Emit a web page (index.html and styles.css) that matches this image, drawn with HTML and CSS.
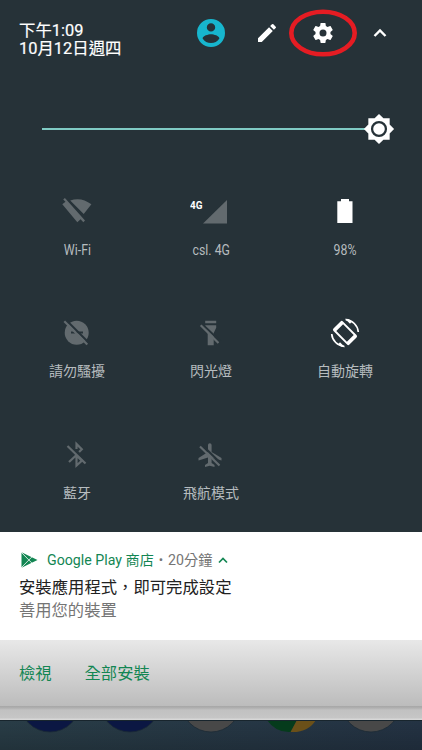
FILE: index.html
```html
<!DOCTYPE html>
<html lang="zh-Hant">
<head>
<meta charset="utf-8">
<title>快速設定</title>
<link rel="stylesheet" href="styles.css">
</head>
<body>
<main class="screen">
  <section class="panel">
    <header class="topbar">
      <div class="clock"><div>下午1:09</div><div>10月12日週四</div></div>
      <svg class="user" viewBox="2 2 20 20"><path fill="#17b6ce" d="M12 2a10 10 0 1 0 0 20 10 10 0 0 0 0-20zm0 3a3 3 0 1 1 0 6 3 3 0 0 1 0-6zm0 14.200a7.200 7.200 0 0 1-6-3.220c.03-1.990 4-3.080 6-3.080s5.970 1.090 6 3.080a7.200 7.200 0 0 1-6 3.220z"/></svg>
      <svg class="edit" viewBox="0 0 24 24"><path fill="#fff" d="M3 17.250V21h3.750L17.810 9.940l-3.750-3.750L3 17.250zM20.710 7.040a1 1 0 0 0 0-1.410l-2.340-2.340a1 1 0 0 0-1.410 0l-1.830 1.830 3.750 3.750 1.830-1.830z"/></svg>
      <span class="gear">
        <svg class="gear-icon" viewBox="0 0 24 24"><path fill="#fff" d="M19.430 12.980c.04-.32.07-.64.07-.98s-.03-.66-.07-.98l2.110-1.650c.19-.15.24-.42.12-.64l-2-3.460c-.12-.22-.39-.3-.61-.22l-2.490 1c-.52-.4-1.080-.73-1.690-.98l-.38-2.650C14.460 2.180 14.250 2 14 2h-4c-.25 0-.46.18-.49.42l-.38 2.650c-.61.25-1.170.59-1.690.98l-2.490-1c-.23-.09-.49 0-.61.22l-2 3.460c-.13.22-.07.49.12.64l2.110 1.650c-.04.32-.07.65-.07.98s.03.66.07.98l-2.110 1.650c-.19.15-.24.42-.12.64l2 3.460c.12.22.39.3.61.22l2.490-1c.52.4 1.080.73 1.690.98l.38 2.650c.03.24.24.42.49.42h4c.25 0 .46-.18.49-.42l.38-2.650c.61-.25 1.170-.59 1.690-.98l2.490 1c.23.09.49 0 .61-.22l2-3.460c.12-.22.07-.49-.12-.64l-2.110-1.650zM12 15.500a3.500 3.500 0 1 1 0-7 3.500 3.500 0 0 1 0 7z"/></svg>
        <svg class="ring" viewBox="0 0 68 48"><ellipse cx="34" cy="24" rx="31.700" ry="21.300" fill="none" stroke="#e51c23" stroke-width="4.600"/></svg>
      </span>
      <svg class="collapse" viewBox="0 0 14 10"><path d="M1.500 8 7 2.500 12.500 8" fill="none" stroke="#fff" stroke-width="2.400"/></svg>
    </header>

    <div class="brightness">
      <div class="track"></div>
      <svg class="thumb" viewBox="0 0 24 24"><path fill="#fff" d="M20 8.690V4h-4.690L12 .69 8.690 4H4v4.690L.69 12 4 15.310V20h4.690L12 23.310 15.310 20H20v-4.690L23.310 12z"/><circle cx="12" cy="12" r="5.200" fill="#fff" stroke="#263238" stroke-width="1.700"/></svg>
    </div>

    <div class="tiles">
      <div class="tile">
        <svg viewBox="0 0 36 36"><path class="dim" d="M3.300 11.300 6.500 8.800 4.200 6.600 5.900 4.900 26 27.500 24.300 29.200 21.600 26.300 18.300 29.300ZM11.200 7.600Q22 3.400 32.400 11.300L24.700 21Z"/></svg>
        <span class="label latin">Wi-Fi</span>
      </div>
      <div class="tile">
        <span class="signal"><b>4G</b><svg viewBox="0 0 24 24"><path class="dim" d="M24 0V23.500H0Z"/></svg></span>
        <span class="label latin">csl. 4G</span>
      </div>
      <div class="tile">
        <svg viewBox="0 0 36 36"><path fill="#fff" d="M14 6h8v2.300h3.500V30H10.300V8.300H14Z"/></svg>
        <span class="label latin">98%</span>
      </div>
      <div class="tile">
        <svg viewBox="0 0 36 36"><circle class="dim" cx="17.700" cy="17.700" r="12"/><path d="M12 17.500h12" stroke="#263238" stroke-width="2"/><path class="gap" d="M7.500 5.500 30 28"/><path class="slash" d="M5.300 6.300 28.300 29.600"/></svg>
        <span class="label">請勿騷擾</span>
      </div>
      <div class="tile">
        <svg viewBox="0 0 36 36"><path class="dim" d="M12.200 5.800h11v2.400h-11ZM12.200 10.200h11v2.600L20.700 18v12.200h-6V18L12.200 12.800Z"/><path class="gap" d="M9 9 27.500 26.500"/><path class="slash" d="M7.700 10.300 25.500 28"/></svg>
        <span class="label">閃光燈</span>
      </div>
      <div class="tile">
        <svg viewBox="0 0 36 36"><g transform="rotate(-45 18 18)" fill="#fff"><path fill-rule="evenodd" d="M13 6.700h10a1.700 1.700 0 0 1 1.700 1.700v19.200a1.700 1.700 0 0 1-1.700 1.700H13a1.700 1.700 0 0 1-1.700-1.700V8.400A1.700 1.700 0 0 1 13 6.700ZM13.200 10.500v15h9.600v-15Z"/></g><path d="M18.700 4.700A13.400 13.400 0 0 1 31.300 17M17.300 31.300A13.400 13.400 0 0 1 4.700 19" fill="none" stroke="#fff" stroke-width="1.700"/><path fill="#fff" d="m18 3.800 5 5 2-2.400-3-2ZM18 32.200l-5-5-2 2.400 3 2Z"/></svg>
        <span class="label">自動旋轉</span>
      </div>
      <div class="tile">
        <svg viewBox="0 0 36 36"><path d="M17.500 12V7l5.300 5.300-2.700 2.700M10 25l7.500-7M17.500 18v10.500l5.300-4.700-4-4" fill="none" stroke="#626a6e" stroke-width="2.200"/><path class="slash" d="M8.500 9 26.500 26.500"/></svg>
        <span class="label">藍牙</span>
      </div>
      <div class="tile">
        <svg viewBox="0 0 36 36"><path class="dim" d="M15 8a1.800 1.800 0 0 1 3.600 0v7L28.500 21v2.600L18.600 20.500V26L21.500 28v2L16.800 28.800 12 30v-2l3-2v-5.500L5.500 23.500V21L15 15Z"/><path class="gap" d="M8.500 7.500 28.500 27"/><path class="slash" d="M7 9.500 26.500 28.500"/></svg>
        <span class="label">飛航模式</span>
      </div>
    </div>
  </section>

  <section class="notice">
    <div class="source">
      <svg class="play" viewBox="0 0 18 18"><path fill="#138653" d="M1.500 1.200 17.500 9 1.500 16.800Z"/><path d="M1 1 12 12.200M1 17 12 5.800" stroke="#fff" stroke-width=".8"/></svg>
      <span class="app">Google Play 商店</span><span class="dot">•</span><span class="age">20分鐘</span>
      <svg class="caret" viewBox="0 0 10 7"><path d="M1 5.500 5 1.500 9 5.500" fill="none" stroke="#138653" stroke-width="1.700"/></svg>
    </div>
    <div class="title">安裝應用程式，即可完成設定</div>
    <div class="subtitle">善用您的裝置</div>
  </section>
  <div class="actions"><span>檢視</span><span>全部安裝</span></div>
  <div class="ledge"></div>
  <svg class="dock" viewBox="0 0 422 30">
    <defs><linearGradient id="sea"><stop offset="0" stop-color="#293d47"/><stop offset="1" stop-color="#243344"/></linearGradient>
    <linearGradient id="fade" x2="0" y2="1"><stop offset="0" stop-color="#000" stop-opacity="0"/><stop offset="1" stop-color="#000" stop-opacity=".18"/></linearGradient></defs>
    <rect width="422" height="30" fill="url(#sea)"/><rect width="422" height="30" fill="url(#fade)"/>
    <g stroke="#1b2a35" stroke-width=".8"><circle cx="50" cy="-18" r="30" fill="#0b1743"/><circle cx="130" cy="-18" r="30" fill="#0b1743"/><circle cx="211" cy="-18" r="30" fill="#484848"/><circle cx="371" cy="-18" r="30" fill="#484848"/></g>
    <path fill="#053b1c" d="M267 0Q276 13 291 12L297 0Z"/><path fill="#6b5019" d="M297 0 290.500 12Q308 13 316 0Z"/>
    <path d="M0 .5h422" stroke="#18252d"/>
  </svg>
</main>
</body>
</html>
```
FILE: styles.css
```css
* { box-sizing: border-box; }
body { margin: 0; font-family: Roboto, "Noto Sans CJK TC", sans-serif; }
svg { display: block; flex: none; }
.screen { width: 422px; height: 750px; overflow: hidden; display: flex; flex-direction: column; background: #263238; }
.panel { height: 532px; background: #263238; }

.topbar { height: 66px; padding-left: 19px; display: flex; align-items: center; }
.clock { width: 178px; padding-top: 13px; color: #fff; font-size: 16.400px; line-height: 18px; white-space: nowrap; -webkit-text-stroke: .2px #fff; }
.user { width: 28px; height: 28px; }
.edit { width: 24px; height: 24px; margin-left: 30px; }
.gear { position: relative; margin-left: 32px; }
.gear-icon { width: 24px; height: 24px; }
.ring { position: absolute; left: -22px; top: -12.500px; width: 68px; height: 48px; }
.collapse { width: 14px; height: 10px; margin-left: 37.500px; }

.brightness { height: 32px; margin: 47px 0 0 42px; display: flex; align-items: center; }
.track { width: 323px; height: 2.500px; background: #80cbc4; }
.thumb { width: 32px; height: 32px; margin-left: -1.700px; }

.tiles { display: grid; grid-template-columns: repeat(3, 134px); grid-auto-rows: 122px; padding: 48px 10px 0; }
.tile { display: flex; flex-direction: column; align-items: center; }
.tile > svg { width: 36px; height: 36px; }
.label { margin: 10px 0 0; font-size: 14px; line-height: 20px; color: #b6bcbf; white-space: nowrap; }
.latin { transform: scaleX(.88); margin-top: 11px; }
.dim { fill: #626a6e; }
.gap { stroke: #263238; stroke-width: 2.200; }
.slash { stroke: #626a6e; stroke-width: 2.200; }
.signal { height: 36px; width: 38px; padding-top: 6.500px; margin-right: 4px; display: flex; }
.signal b { width: 13px; color: #fff; font-size: 11.500px; line-height: 10px; transform: scaleX(.86); transform-origin: left; }
.signal svg { width: 24px; height: 24px; }

.notice { height: 108px; padding: 18px 20px 0 19px; background: #fff; }
.source { height: 20px; display: flex; align-items: center; font-size: 14.200px; line-height: 20px; color: #138653; white-space: nowrap; }
.play { width: 18px; height: 18px; margin: 0 9px 0 1px; }
.app { width: 107px; }
.dot { width: 14px; text-align: center; font-size: 13px; color: #757575; }
.age { color: #757575; width: 43px; }
.caret { width: 10px; height: 7px; margin-left: 6.500px; }
.title { margin-top: 6px; font-size: 16.350px; line-height: 24px; color: #212121; white-space: nowrap; }
.subtitle { font-size: 16.300px; line-height: 22px; color: #757575; }

.actions { height: 66px; padding: 0 0 2px 19px; display: flex; gap: 33px; align-items: center; font-size: 16.300px; color: #138653; background: linear-gradient(#e8e8e8, #bcbcbc); }
.ledge { height: 14px; background: linear-gradient(#a6a6a6, #b0b0b0 2px, #c1c1c1 4px, #c6c6c6 12px, #d7d7d7 13px); }
.dock { width: 422px; height: 30px; }
```
